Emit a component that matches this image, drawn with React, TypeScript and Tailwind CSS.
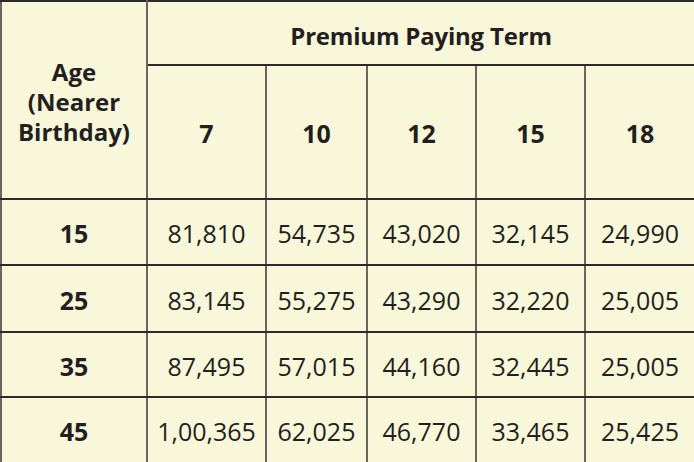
import React from "react";

const terms = ["7", "10", "12", "15", "18"];

const rows = [
  { age: "15", values: ["81,810", "54,735", "43,020", "32,145", "24,990"] },
  { age: "25", values: ["83,145", "55,275", "43,290", "32,220", "25,005"] },
  { age: "35", values: ["87,495", "57,015", "44,160", "32,445", "25,005"] },
  { age: "45", values: ["1,00,365", "62,025", "46,770", "33,465", "25,425"] },
];

const rowHeights = ["h-[66px]", "h-[67px]", "h-[65px]", "h-[66px]"];

const cell = "border-2 border-x-[#66665f] border-y-[#2b2b2b] text-center align-middle px-0 pb-0";

export default function App() {
  return (
    <div className="w-[694px] h-[462px] bg-[#f8f7da] text-[#231f20] font-['Open_Sans',sans-serif]">
      <table className="w-[694px] h-[462px] table-fixed border-collapse">
        <colgroup>
          <col className="w-[146px]" />
          <col className="w-[119px]" />
          <col className="w-[101px]" />
          <col className="w-[109px]" />
          <col className="w-[109px]" />
          <col className="w-[110px]" />
        </colgroup>
        <thead>
          <tr className="h-[64px]">
            <th rowSpan={2} className={`${cell} text-[24px] font-bold leading-[30px] pt-1`}>
              Age
              <br />
              (Nearer
              <br />
              Birthday)
            </th>
            <th colSpan={5} className={`${cell} text-[24px] font-bold tracking-[-0.2px] pt-[5px]`}>
              Premium Paying Term
            </th>
          </tr>
          <tr className="h-[134px]">
            {terms.map((t) => (
              <th key={t} className={`${cell} text-[25px] font-bold pt-[4px]`}>
                {t}
              </th>
            ))}
          </tr>
        </thead>
        <tbody>
          {rows.map((r, i) => (
            <tr key={r.age} className={rowHeights[i]}>
              <td className={`${cell} text-[25px] font-bold pt-[4px]`}>{r.age}</td>
              {r.values.map((v, j) => (
                <td key={j} className={`${cell} text-[25px] pt-[4px]`}>
                  {v}
                </td>
              ))}
            </tr>
          ))}
        </tbody>
      </table>
    </div>
  );
}
